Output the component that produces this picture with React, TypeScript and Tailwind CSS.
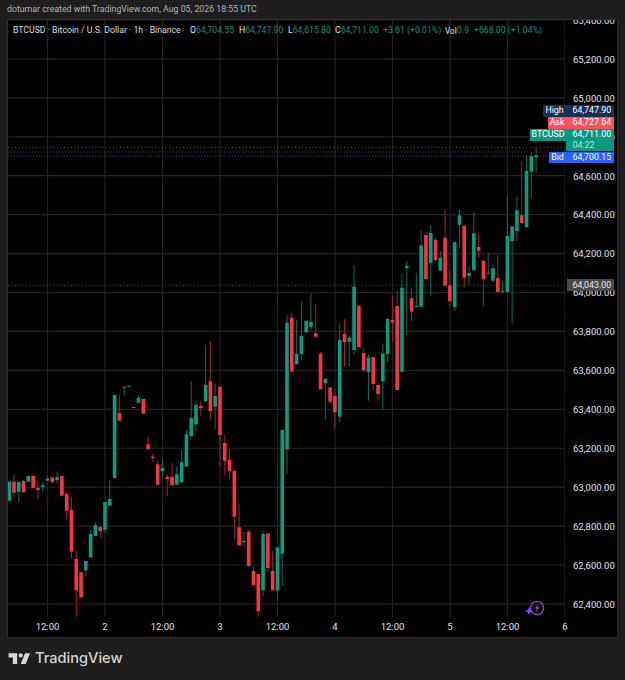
const GREEN = "#0a9b80";
const RED = "#f7334a";
const GREEN_WICK = "#0b6e5c";
const RED_WICK = "#a8202f";

// wick top, wick bottom, body top, body bottom, up?  (page pixels, one bar every 4.79px)
const bars: [number, number, number, number, boolean][] = [
  [481.7, 500.7, 481.7, 500.7, true],
  [474, 497, 481.7, 492.7, false],
  [482, 501.7, 482, 491.7, true],
  [480, 492.3, 481, 492.3, false],
  [476, 481.7, 476, 481.7, true],
  [474, 488, 476, 488, false],
  [481.7, 499, 488, 490, false],
  [481.7, 491.7, 485.3, 487, true],
  [475.7, 480.7, 478.7, 480.7, true],
  [477.3, 482.3, 477.3, 482.3, false],
  [472, 483.7, 476.7, 480, true],
  [476, 495.7, 476, 495.7, false],
  [491, 519.7, 494, 510.7, false],
  [497, 558, 510, 551.7, false],
  [550, 616.7, 559, 590.3, false],
  [572.3, 598.7, 572.3, 597, false],
  [561, 576.7, 561, 570.3, true],
  [529.7, 557.3, 534, 557.3, true],
  [522.3, 536, 525, 536, true],
  [525, 537.7, 527, 531, false],
  [502, 532.7, 502, 529.7, true],
  [480.3, 505.7, 499, 505.7, true],
  [395, 478, 395, 478, true],
  [395, 420.7, 413, 420.7, false],
  [386.7, 396, 386.7, 387.7, true],
  [385.7, 386.7, 385.7, 386.7, true],
  [407, 407.7, 407, 407.7, false],
  [395.3, 402.7, 398, 402.7, true],
  [399, 413.7, 399, 413.7, false],
  [436.7, 449.3, 444.3, 449.3, false],
  [453.3, 462.3, 456.7, 458, false],
  [461, 484.7, 464.3, 484.7, false],
  [459, 477, 468, 471, true],
  [474, 496, 476.7, 479, false],
  [463.3, 486, 476.7, 485, false],
  [466, 484.7, 474.3, 484.7, true],
  [450, 482.3, 462.3, 482.3, true],
  [430, 466.7, 434.3, 466.7, true],
  [381.3, 437.7, 418, 436, true],
  [401, 431.7, 405, 424.3, true],
  [401, 416, 406, 408, false],
  [345, 401.3, 385, 401.3, true],
  [341.7, 420, 381.3, 411, false],
  [384, 429, 396, 406.7, true],
  [386.7, 466.7, 386.7, 435, false],
  [435.3, 475, 443, 460.7, false],
  [449, 478.7, 460, 471, false],
  [469.3, 539.3, 471, 516.7, false],
  [504.3, 545.3, 527.3, 545.3, false],
  [531.7, 547, 541, 542, true],
  [530, 566, 531.7, 566, false],
  [566.3, 585, 571, 585, false],
  [574, 616.7, 574, 611, false],
  [531, 596, 534, 590.3, true],
  [533.3, 571.7, 533.3, 568, false],
  [551, 590.3, 571, 590.3, false],
  [547.3, 600.7, 547.3, 590.3, true],
  [430, 586, 430, 553.7, true],
  [315, 474, 322.7, 449.3, true],
  [312.3, 371.7, 317.7, 371.7, false],
  [320, 364.3, 354, 364.3, true],
  [301, 360, 336, 354, true],
  [320.7, 332.3, 320.7, 332.3, true],
  [293.3, 329.3, 322, 327, true],
  [304, 336.7, 333.3, 336.7, false],
  [352, 389.3, 353.7, 389.3, false],
  [378.7, 420, 378.7, 383, true],
  [387.3, 404, 387.3, 401.7, false],
  [389.3, 428, 396, 412.3, false],
  [323.3, 422.3, 340, 416.7, true],
  [319.3, 366.7, 334, 342, false],
  [335, 366.7, 337.7, 341.7, true],
  [265, 354, 286.7, 350, true],
  [305.7, 347.3, 305.7, 347.3, false],
  [348, 370.3, 353, 370.3, false],
  [354, 400.7, 357.7, 372, true],
  [357, 390, 357, 384, false],
  [383, 400.7, 385, 394, false],
  [343.7, 408.7, 353.7, 381.3, true],
  [317.7, 362, 319, 354, true],
  [295.7, 342, 320, 322.7, false],
  [290.7, 390, 306, 390, false],
  [273.3, 371.7, 287.7, 371.7, true],
  [260.7, 335, 266, 268, true],
  [287.7, 321, 298.3, 311.7, false],
  [273, 307, 306, 307, true],
  [230.7, 306.7, 245.3, 306.7, true],
  [232.3, 279, 235, 279, false],
  [225, 295.7, 233, 262.7, true],
  [237.7, 261.7, 240, 260, false],
  [251, 270.7, 257.7, 270.7, true],
  [209.3, 285.7, 237.7, 285.7, false],
  [270, 306, 285.3, 301.3, false],
  [242, 310.7, 242, 307, true],
  [210, 248.3, 215.3, 224.7, true],
  [225.7, 287.7, 225.7, 277.7, false],
  [265.7, 285, 273, 276, true],
  [212, 270.3, 233.3, 270.3, true],
  [233.3, 257.7, 247, 250.7, false],
  [260.7, 306, 260.7, 279, false],
  [252.7, 273.7, 272.7, 273.7, true],
  [264.3, 280.7, 268.3, 280.7, true],
  [255, 292, 278, 292, false],
  [281, 292.3, 291.3, 292.3, true],
  [196.3, 292, 236, 292, true],
  [226.3, 323.3, 226.3, 241, true],
  [196.7, 241, 210.3, 231, true],
  [161, 223, 215.3, 223, false],
  [155, 227, 171, 227, true],
  [152.3, 198.3, 156, 171.7, true],
  [147.3, 172.7, 155.3, 157, true],
];

const prices = ["65,400.00", "65,200.00", "65,000.00", "64,800.00", "64,600.00", "64,400.00", "64,200.00", "64,000.00", "63,800.00", "63,600.00", "63,400.00", "63,200.00", "63,000.00", "62,800.00", "62,600.00", "62,400.00"];
const times = ["12:00", "2", "12:00", "3", "12:00", "4", "12:00", "5", "12:00", "6"];
const gridX = [47.5, 104.9, 162.5, 220, 277.5, 335, 392.5, 450, 507.5, 565];

function Chart() {
  return (
    <svg width="557" height="597" viewBox="8 20 557 597" className="block shrink-0">
      {gridX.map((x) => (
        <line key={x} x1={x} x2={x} y1="20" y2="617" stroke="#232323" strokeWidth="1.2" />
      ))}
      {prices.map((p, i) => (
        <line key={p} x1="8" x2="565" y1={20 + i * 38.93} y2={20 + i * 38.93} stroke="#242424" strokeWidth="1.2" />
      ))}
      <line x1="8" x2="565" y1="147.3" y2="147.3" stroke="#5a5a5a" strokeDasharray="1 2.5" />
      <line x1="8" x2="565" y1="152" y2="152" stroke="#8a2a35" strokeDasharray="1 2" strokeWidth="1.2" />
      <line x1="8" x2="565" y1="156" y2="156" stroke="#234a94" strokeDasharray="1.2 1.6" strokeWidth="1.2" />
      <line x1="8" x2="565" y1="285.3" y2="285.3" stroke="#4a4a4a" strokeDasharray="1 2.5" />
      {bars.map(([wt, wb, bt, bb, up], i) => {
        const x = 9.2 + i * 4.79;
        return (
          <g key={i}>
            <line x1={x} x2={x} y1={wt} y2={wb} stroke={up ? GREEN_WICK : RED_WICK} strokeWidth="1" />
            <rect x={x - 1.8} y={bt} width="3.6" height={Math.max(bb - bt, 1)} fill={up ? GREEN : RED} />
          </g>
        );
      })}
      <circle cx="537" cy="608" r="6.6" fill="none" stroke="#9a3fc4" strokeWidth="1.3" />
      <path d="M538.8 603.8 L534.8 608.4 L537 608.4 L535.4 612 L539.4 607.2 L537.2 607.2 Z" fill="#a44bd6" />
      <path d="M529 607 L530.2 609.8 L533 611 L530.2 612.2 L529 615 L527.8 612.2 L525 611 L527.8 609.8 Z" fill="#7350ff" />
    </svg>
  );
}

function PriceTag({ label, value, sub, bg, tagW }: { label: string; value: string; sub?: string; bg: string; tagW: string }) {
  return (
    <div className="flex items-start justify-end">
      <div className={`h-[11.5px] flex items-center justify-center rounded-l-[1px] whitespace-nowrap ${bg} ${tagW}`}>
        {label}
      </div>
      <div className={`w-[48px] pl-[6.5px] flex flex-col ${bg}`}>
        <span className="h-[11.5px] leading-[11.5px]">{value}</span>
        {sub && <span className="h-[10.5px] leading-[8px] text-[#b5e2d8]">{sub}</span>}
      </div>
    </div>
  );
}

export default function App() {
  return (
    <div
      className="w-[625px] h-[680px] bg-[#1e1e1e] overflow-hidden flex flex-col text-[9.5px] text-[#e2e2e2]"
      style={{ fontFamily: "Roboto, sans-serif" }}
    >
      <div className="h-[19px] pl-[7px] flex items-center pt-[1px] text-[#b4b4b4] text-[8.75px] whitespace-nowrap">
        dotumar created with TradingView.com, Aug 05, 2026 18:55 UTC
      </div>

      <div className="relative ml-[7px] w-[611px] h-[619px] border border-[#2c2c2c] bg-black overflow-hidden">
        <div className="flex h-[597px]">
          <Chart />
          <div className="flex-1 flex flex-col -mt-[18.5px] pl-[8px]">
            {prices.map((p) => (
              <div key={p} className="h-[38.93px] shrink-0 flex items-center">
                {p}
              </div>
            ))}
          </div>
        </div>
        <div className="flex h-[20px] items-center pl-[10.75px]">
          {times.map((t, i) => (
            <div key={i} className="w-[57.5px] shrink-0 text-center">
              {t}
            </div>
          ))}
        </div>

        <div className="absolute left-[5px] top-[5px] flex items-center h-[12px] whitespace-nowrap text-[8.7px]">
          <span className="w-[177px] text-[#dcdcdc]">BTCUSD · Bitcoin / U.S. Dollar · 1h · Binance</span>
          <span className="w-[49px]">O<span className="text-[#0a8f77]">64,704.55</span></span>
          <span className="w-[49px]">H<span className="text-[#0a8f77]">64,747.90</span></span>
          <span className="w-[47px]">L<span className="text-[#0a8f77]">64,615.80</span></span>
          <span className="w-[48px]">C<span className="text-[#0a8f77]">64,711.00</span></span>
          <span className="w-[62px] text-[#0a8f77]">+3.61 (+0.01%)</span>
          <span className="w-[12px] text-[8.2px]">Vol</span>
          <span className="w-[17px] text-[#0a8f77]">0.9</span>
          <span className="text-[#0a8f77]">+668.00 (+1.04%)</span>
        </div>

        <div className="absolute right-[3px] top-[85px] flex flex-col gap-[0.5px] text-white text-[8.8px]">
          <PriceTag label="High" value="64,747.90" bg="bg-[#1b2d52]" tagW="w-[23px]" />
          <PriceTag label="Ask" value="64,727.64" bg="bg-[#f7525f]" tagW="w-[18px]" />
          <PriceTag label="BTCUSD" value="64,711.00" sub="04:22" bg="bg-[#089981]" tagW="w-[36px]" />
          <PriceTag label="Bid" value="64,700.15" bg="bg-[#2962ff]" tagW="w-[17px]" />
        </div>

        <div className="absolute right-[3px] top-[259px] w-[47px] h-[12px] pl-[5.5px] bg-[#4a4a4a] leading-[12px] text-[8.8px] text-[#e8e8e8]">
          64,043.00
        </div>
      </div>

      <div className="flex-1 flex items-center pl-[6.5px] gap-[2.5px] pb-[1px]">
        <svg width="26" height="20" viewBox="0 0 36 28" fill="#d8d8d8">
          <path d="M14 6H2v6h6v9h6V6Zm12 15h-7l6-15h7l-6 15Zm-7-9a3 3 0 1 0 0-6 3 3 0 0 0 0 6Z" />
        </svg>
        <span className="text-[14.6px] font-medium text-[#d4d4d4]" style={{ fontFamily: "Inter, sans-serif" }}>
          TradingView
        </span>
      </div>
    </div>
  );
}
